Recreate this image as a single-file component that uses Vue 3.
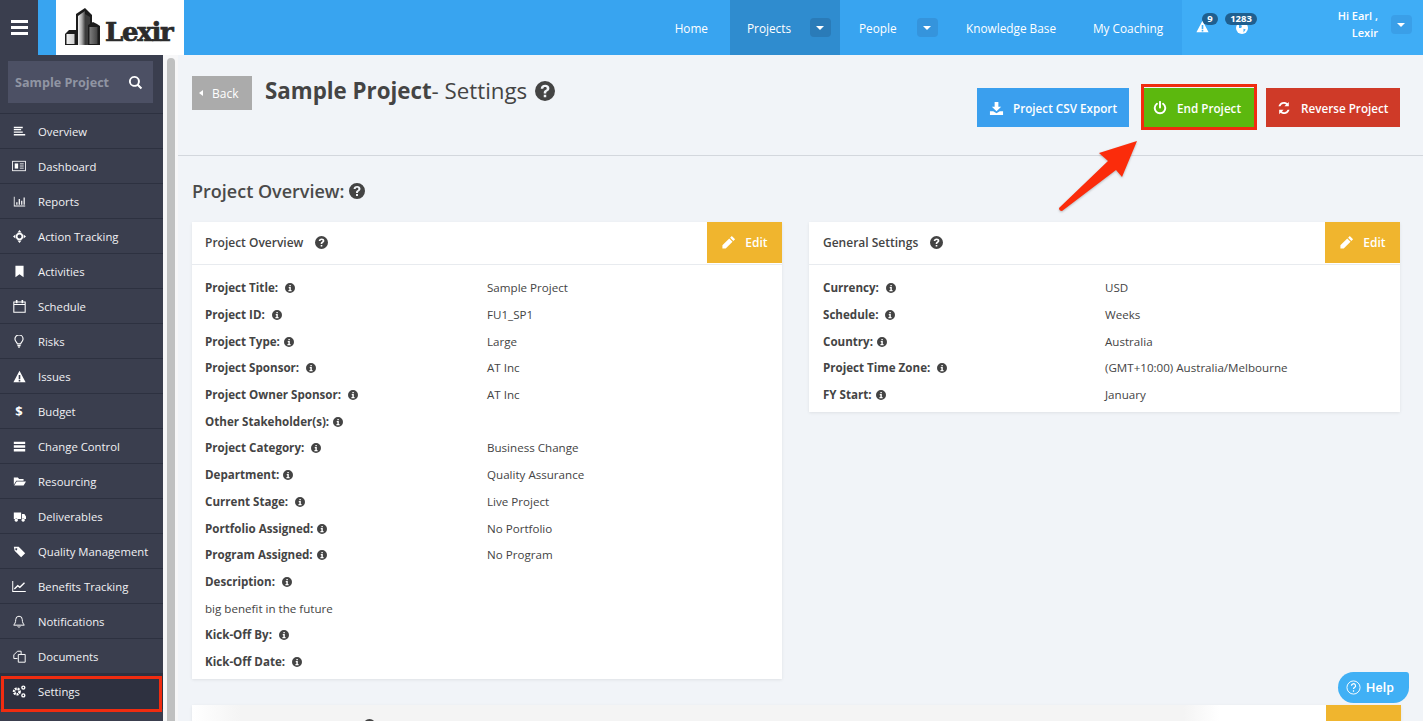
<script setup>
const ic = {
  overview: 'M1 2h11v2H1zM1 5h9v1.500H1zM1 8h11v1.500H1zM1 11h14v2H1z',
  reports: 'M1 2h1v11h13v1H1zM4 9h1.500v3H4zM7 5h1.500v7H7zM10 7h1.500v5H10zM13 3h1.500v9H13z',
  bookmark: 'M3 1h10v14l-5-3.500L3 15z',
  warn: 'M8 1l7.500 14H.5zM7 6v5h2V6zm0 6v2h2v-2z',
  change: 'M1 2h14v3H1zM1 6.500h14v3H1zM1 11h14v3H1z',
  folder: 'M1 3h5l1.500 2H13v2H4L1 12zM4.500 8H16l-3 5H1.500z',
  truck: 'M1 3h9v8H1zM11 5h3l2 3v3h-5zM4 10.500a2 2 0 1 0 .01 0zM12.500 10.500a2 2 0 1 0 .01 0z',
  tag: 'M1 2h6l8 8-5 5-8-8zM4 4a1.200 1.200 0 1 0 .01 0z',
  help: 'M8 0a8 8 0 1 0 0 16A8 8 0 0 0 8 0zm.2 3c2 0 3.300 1.100 3.300 2.800 0 1.300-.7 1.900-1.500 2.400-.7.4-1 .7-1 1.300v.4H7v-.6c0-1 .5-1.600 1.300-2.100.7-.4 1.100-.7 1.100-1.300 0-.7-.5-1.100-1.300-1.100-.9 0-1.400.5-1.500 1.300H4.600C4.700 4.200 6 3 8.200 3zM7 11h2v2H7z',
  info: 'M8 0a8 8 0 1 0 0 16A8 8 0 0 0 8 0zM7 3h2.300v2.200H7zM6 6.500h3.300V11H10.500v2h-5v-2H7V8.500H6z',
  search: 'M6.800 1a5.800 5.800 0 1 0 3.300 10.600l3.500 3.500 1.500-1.500-3.500-3.500A5.800 5.800 0 0 0 6.800 1zm0 2a3.800 3.800 0 1 1 0 7.600 3.800 3.800 0 0 1 0-7.600z',
  pencil: 'M11.500 1l3.500 3.500-1.800 1.800-3.500-3.500zM8.800 3.700l3.500 3.500L5 14.500H1.500V11z',
  download: 'M6 1h4v5h3L8 11 3 6h3zM1 11h3.500L8 13l3.500-2H15v4H1z',
  sync: 'M13.500 1v5h-5l1.900-1.900A4.300 4.300 0 0 0 3.900 6H1.700a6.500 6.500 0 0 1 10.300-3.500zM2.500 15v-5h5l-1.900 1.900a4.300 4.300 0 0 0 6.500-1.900h2.200A6.500 6.500 0 0 1 4 13.500z'
}
const nav = [
  ['Overview','overview'],['Dashboard','dash'],['Reports','reports'],['Action Tracking','action'],['Activities','bookmark'],
  ['Schedule','cal'],['Risks','bulb'],['Issues','warn'],['Budget','dollar'],['Change Control','change'],['Resourcing','folder'],
  ['Deliverables','truck'],['Quality Management','tag'],['Benefits Tracking','chart'],['Notifications','bell'],['Documents','docs'],['Settings','gears']
].map(([label, icon]) => ({ label, icon }))
const overviewRows = [
  ['Project Title:','Sample Project',7],['Project ID:','FU1_SP1',7],['Project Type:','Large',4],['Project Sponsor:','AT Inc',7],
  ['Project Owner Sponsor:','AT Inc',7],['Other Stakeholder(s):','',4],['Project Category:','Business Change',7],['Department:','Quality Assurance',4],
  ['Current Stage:','Live Project',7],['Portfolio Assigned:','No Portfolio',4],['Program Assigned:','No Program',4]
]
const generalRows = [
  ['Currency:','USD',7],['Schedule:','Weeks',7],['Country:','Australia',4],['Project Time Zone:','(GMT+10:00) Australia/Melbourne',7],['FY Start:','January',4]
]
</script>

<template>
  <div class="page">
    <header class="top">
      <button class="burger" aria-label="Menu"><i></i><i></i><i></i></button>
      <div class="logo">
        <svg width="36" height="37" viewBox="0 0 36 37">
          <defs><linearGradient id="bld" x1="0" x2="1"><stop offset="0" stop-color="#f2f2f2"/><stop offset=".55" stop-color="#a8a8a8"/><stop offset="1" stop-color="#444"/></linearGradient></defs>
          <path fill="#1c1c1c" d="M11 6L20 0l7 7v30H11z"/>
          <path fill="url(#bld)" d="M13 8l7-5v34h-7z"/>
          <path fill="#3c3c3c" d="M20 6l5 3v28h-5z"/>
          <path fill="#1c1c1c" d="M0 26l4-4h8v15H0zM23 17l5-3 4 2 3 2v19H23z"/>
          <path fill="url(#bld)" d="M1.500 26h8v10h-8zM24.500 19h8v17h-8z"/>
        </svg>
        <span class="logo-text">Lexir</span>
      </div>
      <nav class="menu">
        <a class="mi home">Home</a>
        <a class="mi active projects">Projects<b class="caret"></b></a>
        <a class="mi people">People<b class="caret"></b></a>
        <a class="mi kb">Knowledge Base</a>
        <a class="mi coach">My Coaching</a>
        <div class="right">
          <div class="alerts">
            <span class="alert">
              <svg width="13" height="13" viewBox="0 0 16 16"><path fill="#fff" :d="ic.warn"/></svg>
              <em class="count c1">9</em>
            </span>
            <span class="alert globe">
              <svg width="12" height="12" viewBox="0 0 16 16"><circle cx="8" cy="8" r="8" fill="#fff"/><path fill="#3fadf6" d="M4 3l4 2-1 3-3 0zM10 9l3 1-3 4z"/></svg>
              <em class="count c2">1283</em>
            </span>
          </div>
          <div class="user"><span>Hi Earl ,</span><span>Lexir</span></div>
          <b class="caret user-caret"></b>
        </div>
      </nav>
    </header>

    <div class="body">
      <aside class="side">
        <div class="search">
          <span>Sample Project</span>
          <svg width="15" height="15" viewBox="0 0 16 16"><path fill="#fff" :d="ic.search"/></svg>
        </div>
        <ul class="items">
          <li v-for="n in nav" :key="n.label" :class="{ cur: n.label === 'Settings' }">
            <span class="ni">
              <svg v-if="ic[n.icon]" width="13" height="13" viewBox="0 0 16 16"><path fill="#fff" :d="ic[n.icon]"/></svg>
              <svg v-else-if="n.icon === 'dash'" width="14" height="12" viewBox="0 0 16 14" fill="none" stroke="#fff"><rect x=".5" y="1.500" width="15" height="11"/><rect x="3" y="4" width="4" height="6" fill="#fff" stroke="none"/><path d="M9 4.500h4.500M9 7h4.500M9 9.500h4.500"/></svg>
              <svg v-else-if="n.icon === 'action'" width="13" height="13" viewBox="0 0 16 16" fill="#fff"><path d="M8 0l2.500 3h-5zM8 16l-2.500-3h5zM0 8l3-2.500v5zM16 8l-3 2.500v-5z"/><circle cx="8" cy="8" r="3.500" fill="none" stroke="#fff" stroke-width="2"/></svg>
              <svg v-else-if="n.icon === 'cal'" width="13" height="13" viewBox="0 0 16 16" fill="none" stroke="#fff" stroke-width="1.300"><path d="M1 5.500h14M1 2.500h14v12.500H1z"/><path d="M4.500 0v4M11.500 0v4" stroke-width="2"/></svg>
              <svg v-else-if="n.icon === 'bulb'" width="10" height="13" viewBox="0 0 12 16" fill="none" stroke="#fff" stroke-width="1.400"><path d="M4 11C3.500 8.500 1 8 1 5a5 5 0 0 1 10 0c0 3-2.500 3.500-3 6z"/><path d="M4 13h4M5 15h2" stroke-width="1.600"/></svg>
              <span v-else-if="n.icon === 'dollar'" class="dollar">$</span>
              <svg v-else-if="n.icon === 'chart'" width="14" height="11" viewBox="0 0 16 13" fill="none" stroke="#fff" stroke-width="1.200"><path d="M.6 0v12.400H16"/><path d="M2.500 9.500L6.500 5.500 9 7.500 14.500 2" stroke-width="1.600"/></svg>
              <svg v-else-if="n.icon === 'bell'" width="12" height="13" viewBox="0 0 14 16" fill="none" stroke="#fff" stroke-width="1.200"><path d="M7 1.500a4 4 0 0 0-4 4c0 4-1.500 5.500-2.500 7h13c-1-1.500-2.500-3-2.500-7a4 4 0 0 0-4-4zM5.500 14a1.600 1.600 0 0 0 3 0"/></svg>
              <svg v-else-if="n.icon === 'docs'" width="13" height="13" viewBox="0 0 16 16" fill="none" stroke="#fff" stroke-width="1.200"><path d="M5.500 10.500H1V6l4.500-4.500H10V5M6.500 5.500H15V15H6.500z"/></svg>
              <svg v-else-if="n.icon === 'gears'" width="14" height="13" viewBox="0 0 16 15" fill="none" stroke="#fff"><circle cx="5.500" cy="7.500" r="3.200" stroke-width="3" stroke-dasharray="2.200 .9"/><circle cx="13" cy="3" r="1.700" stroke-width="1.600"/><circle cx="13" cy="12" r="1.700" stroke-width="1.600"/></svg>
            </span>
            <span>{{ n.label }}</span>
          </li>
        </ul>
      </aside>
      <div class="track"><div class="thumb"></div></div>

      <main class="main">
        <div class="head">
          <a class="back"><i class="tri"></i>Back</a>
          <h1><span><b>Sample Project</b>- Settings</span>
            <svg width="20" height="20" viewBox="0 0 16 16"><path fill="#444" :d="ic.help"/></svg>
          </h1>
          <div class="actions">
            <a class="btn blue">
              <svg width="15" height="15" viewBox="0 0 16 16"><path fill="#fff" :d="ic.download"/></svg>
              <span>Project CSV Export</span>
            </a>
            <a class="btn green">
              <svg width="14" height="14" viewBox="0 0 16 16" fill="none" stroke="#fff" stroke-width="2.200" stroke-linecap="round"><path d="M8 1v6.500M4.500 3.200a6 6 0 1 0 7 0"/></svg>
              <span>End Project</span>
            </a>
            <a class="btn red">
              <svg width="14" height="14" viewBox="0 0 16 16"><path fill="#fff" :d="ic.sync"/></svg>
              <span>Reverse Project</span>
            </a>
          </div>
        </div>

        <h2>Project Overview:
          <svg width="16" height="16" viewBox="0 0 16 16"><path fill="#444" :d="ic.help"/></svg>
        </h2>

        <div class="cols">
          <section class="card">
            <div class="card-h">
              <span>Project Overview</span>
              <svg width="13" height="13" viewBox="0 0 16 16"><path fill="#444" :d="ic.help"/></svg>
              <a class="edit"><svg width="15" height="15" viewBox="0 0 16 16"><path fill="#fff" :d="ic.pencil"/></svg>Edit</a>
            </div>
            <div class="card-b">
              <div v-for="r in overviewRows" :key="r[0]" class="row">
                <div class="k"><b>{{ r[0] }}</b><svg :style="{ marginLeft: r[2] + 'px' }" width="10" height="10" viewBox="0 0 16 16"><path fill="#444" :d="ic.info"/></svg></div>
                <div class="v">{{ r[1] }}</div>
              </div>
              <div class="row"><div class="k"><b>Description:</b><svg class="gap" width="10" height="10" viewBox="0 0 16 16"><path fill="#444" :d="ic.info"/></svg></div></div>
              <div class="row">big benefit in the future</div>
              <div class="row"><div class="k"><b>Kick-Off By:</b><svg class="gap" width="10" height="10" viewBox="0 0 16 16"><path fill="#444" :d="ic.info"/></svg></div></div>
              <div class="row"><div class="k"><b>Kick-Off Date:</b><svg class="gap" width="10" height="10" viewBox="0 0 16 16"><path fill="#444" :d="ic.info"/></svg></div></div>
            </div>
          </section>
          <section class="card gen">
            <div class="card-h">
              <span>General Settings</span>
              <svg width="13" height="13" viewBox="0 0 16 16"><path fill="#444" :d="ic.help"/></svg>
              <a class="edit"><svg width="15" height="15" viewBox="0 0 16 16"><path fill="#fff" :d="ic.pencil"/></svg>Edit</a>
            </div>
            <div class="card-b">
              <div v-for="r in generalRows" :key="r[0]" class="row">
                <div class="k"><b>{{ r[0] }}</b><svg :style="{ marginLeft: r[2] + 'px' }" width="10" height="10" viewBox="0 0 16 16"><path fill="#444" :d="ic.info"/></svg></div>
                <div class="v">{{ r[1] }}</div>
              </div>
            </div>
          </section>
        </div>

        <section class="card stub">
          <svg class="stub-help" width="13" height="13" viewBox="0 0 16 16"><path fill="#444" :d="ic.help"/></svg>
          <a class="edit"></a>
        </section>
      </main>
    </div>

    <div class="mark side-mark"></div>
    <div class="mark end-mark"></div>
    <svg class="arrow" width="90" height="80" viewBox="0 0 90 80">
      <path fill="#fb2c0b" d="M79 7L41 19l9 8L1 74q0 3 3 3L58 36l6 7z"/>
    </svg>
    <a class="help-btn">
      <svg width="15" height="15" viewBox="0 0 16 16" fill="none" stroke="#fff"><circle cx="8" cy="8" r="7"/><path d="M5.800 6.200a2.200 2.200 0 1 1 3.300 1.900c-.7.400-1.100.8-1.100 1.500M8 11v1.400" stroke-width="1.300"/></svg>
      <span>Help</span>
    </a>
  </div>
</template>

<style>
html, body { margin: 0; height: 100%; overflow: hidden; }
</style>

<style scoped>
.page { position: relative; width: 1423px; height: 721px; overflow: hidden; background: #f1f4f8; font-family: "Open Sans", "Liberation Sans", sans-serif; font-size: 12px; color: #444; display: flex; flex-direction: column; }
a { cursor: pointer; }

.top { height: 55px; flex: none; display: flex; background: #38a4f0; }
.burger { width: 38px; padding: 0; border: 0; background: #3a3e4e; display: flex; flex-direction: column; justify-content: center; align-items: center; gap: 3px; }
.burger i { width: 17px; height: 3px; background: #fff; }
.logo { width: 128px; margin-left: 18px; background: #fff; display: flex; align-items: flex-end; padding: 0 0 10px 9px; box-sizing: border-box; }
.logo-text { font-family: "DejaVu Serif", "Liberation Serif", serif; font-weight: 900; font-size: 26px; line-height: 26px; color: #2b2b2b; letter-spacing: -1.300px; margin-left: 4px; -webkit-text-stroke: .7px #2b2b2b; }
.menu { margin-left: auto; display: flex; align-items: stretch; color: #fff; }
.mi { display: flex; align-items: center; font-size: 11.800px; color: #fff; box-sizing: border-box; }
.home { padding: 0 22px 0 0; }
.projects { width: 110px; padding-left: 17px; background: #2f8ccf; }
.people { width: 107px; padding-left: 19px; }
.kb { width: 127px; padding-left: 19px; }
.coach { width: 108px; padding-left: 19px; }
.right { display: flex; background: #3fadf6; }
.caret { position: relative; display: block; width: 21px; height: 19px; background: #3594dc; border-radius: 4px; margin-left: 20px; }
.projects .caret { background: #2a7bb8; margin-left: 19px; }
.caret::after { content: ""; position: absolute; left: 6px; top: 8px; border: 4px solid transparent; border-top: 4px solid #fff; border-bottom: 0; }
.alerts { width: 136px; position: relative; }
.alert { position: absolute; top: 20px; left: 14px; line-height: 0; }
.alert.globe { left: 54px; top: 22px; }
.count { position: absolute; font-style: normal; font-weight: 700; font-size: 9.500px; line-height: 12px; height: 12px; background: #1f5f8f; color: #fff; border-radius: 6px; text-align: center; }
.c1 { left: 6px; top: -7px; width: 16px; }
.c2 { left: -11px; top: -9px; width: 32px; }
.user { width: 60px; padding-top: 7px; display: flex; flex-direction: column; align-items: flex-end; font-size: 11px; font-weight: 600; line-height: 17px; color: #fff; }
.user-caret { align-self: flex-start; margin: 15px 11px 0 13px; background: #3a9fe8; }

.body { flex: 1; display: flex; min-height: 0; }
.side { width: 163px; flex: none; background: #3a3e4e; color: #fff; }
.search { height: 42px; margin: 6px 10px 0 8px; padding: 0 10px 0 7px; display: flex; align-items: center; justify-content: space-between; background: #4c5064; font-size: 12.600px; font-weight: 700; color: #9095a3; white-space: nowrap; }
.items { list-style: none; margin: 10px 0 0; padding: 0; border-top: 1px solid #2d3140; }
.items li { height: 34px; border-bottom: 1px solid #2d3140; display: flex; align-items: center; font-size: 11.300px; color: #f1f1f4; }
.items .cur { background: #2e3140; }
.ni { width: 38px; display: flex; justify-content: center; box-sizing: border-box; }
.dollar { font-weight: 700; font-size: 13px; line-height: 13px; color: #fff; }
.track { width: 15px; flex: none; background: #f7f7f8; position: relative; }
.thumb { position: absolute; left: 4px; top: 3px; bottom: 0; width: 8px; background: #bfc0c0; border-radius: 4px 4px 0 0; }

.main { flex: 1; min-width: 0; padding: 0 23px 0 14px; box-sizing: border-box; }
.head { height: 101px; box-sizing: border-box; margin: 0 -23px 0 -14px; padding: 21px 23px 0 14px; border-bottom: 1px solid #d3d7dd; display: flex; align-items: flex-start; }
.back { width: 60px; height: 34px; background: #ababab; color: #fff; display: flex; align-items: center; font-size: 12px; box-sizing: border-box; padding-left: 7px; }
.tri { width: 0; height: 0; border: 3.500px solid transparent; border-right: 4px solid #fff; border-left: 0; margin-right: 9px; }
h1 { margin: -1px 0 0 13px; font-size: 22.300px; line-height: 32px; font-weight: 400; color: #444; white-space: nowrap; display: flex; align-items: center; gap: 8px; }
h1 b { font-weight: 700; }
.actions { margin-left: auto; margin-top: 12px; display: flex; gap: 12px; }
.btn { height: 39px; padding-top: 1px; display: flex; align-items: center; gap: 10px; color: #fff; font-weight: 600; font-size: 11.700px; box-sizing: border-box; white-space: nowrap; }
.blue { width: 152px; background: #3a9fee; padding-left: 12px; gap: 9px; }
.green { width: 113px; background: #5cb80e; padding-left: 12px; }
.red { width: 134px; background: #cf3a28; padding-left: 11px; }

h2 { margin: 23px 0 0; font-size: 18px; line-height: 24px; font-weight: 600; color: #4a4a4a; display: flex; align-items: center; gap: 5px; }
.cols { display: grid; grid-template-columns: 590px 591px; gap: 27px; margin-top: 19px; align-items: start; }
.card { background: #fff; box-shadow: 0 1px 3px rgba(0,0,0,.08); }
.card-h { position: relative; height: 43px; box-sizing: border-box; display: flex; align-items: center; padding: 0 0 2px 13px; gap: 12px; border-bottom: 1px solid #e8ebef; font-size: 12px; font-weight: 600; color: #444; }
.edit { position: absolute; right: 0; top: 0; width: 75px; height: 41px; background: #f0b52e; display: flex; align-items: center; justify-content: center; gap: 9px; color: #fff; font-weight: 600; font-size: 12px; }
.card-b { padding: 10px 13px 3.900px; }
.gen .card-h { padding-left: 14px; }
.gen .card-b { padding-left: 14px; padding-right: 14px; }
.row { height: 26.700px; display: flex; align-items: center; font-size: 11.600px; line-height: 16px; color: #444; }
.k { width: 282px; flex: none; display: flex; align-items: center; white-space: nowrap; }
.k b { font-weight: 700; }
.gap { margin-left: 7px; }
.stub { position: relative; height: 60px; margin: 26px -1px 0 0; background: linear-gradient(90deg, #fff 0, #f4f4f4 4%, #f4f4f4 82%, #fff 85%); }
.stub-help { position: absolute; left: 171px; top: 14px; }

.mark { position: absolute; border: 3px solid #f02c10; box-sizing: border-box; }
.side-mark { left: 1px; top: 676px; width: 161px; height: 36px; }
.end-mark { left: 1141px; top: 84px; width: 116px; height: 46px; }
.arrow { position: absolute; left: 1058px; top: 134px; filter: drop-shadow(0 1px 1px rgba(0,0,0,.25)); }
.help-btn { position: absolute; left: 1338px; top: 672px; width: 71px; height: 31px; background: #40b0f5; border-radius: 16px 3px 16px 16px; color: #fff; display: flex; align-items: center; gap: 5px; padding-left: 8px; box-sizing: border-box; font-family: Roboto, "Liberation Sans", sans-serif; font-size: 13px; font-weight: 500; letter-spacing: .3px; }
</style>
